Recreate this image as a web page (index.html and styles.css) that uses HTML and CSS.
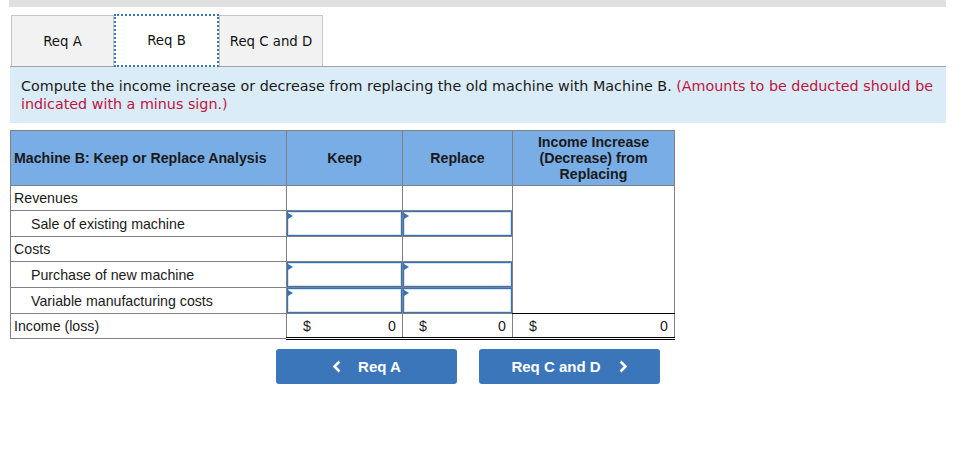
FILE: index.html
```html
<!DOCTYPE html>
<html>
<head>
<meta charset="utf-8">
<link rel="stylesheet" href="styles.css">
</head>
<body>
<div class="topbar"></div>
<div class="tabs">
  <div class="tab">Req A</div>
  <div class="tab active">Req B</div>
  <div class="tab">Req C and D</div>
</div>
<div class="panel">
  Compute the income increase or decrease from replacing the old machine with Machine B. <span class="note">(Amounts to be deducted should be indicated with a minus sign.)</span>
</div>
<table class="grid">
  <colgroup>
    <col class="c1"><col class="c2"><col class="c3"><col class="c4">
  </colgroup>
  <thead>
    <tr class="head">
      <th class="lbl">Machine B: Keep or Replace Analysis</th>
      <th>Keep</th>
      <th>Replace</th>
      <th>Income Increase<br>(Decrease) from<br>Replacing</th>
    </tr>
  </thead>
  <tbody>
    <tr class="r25">
      <td>Revenues</td>
      <td></td>
      <td></td>
      <td class="merged" rowspan="5"></td>
    </tr>
    <tr class="r26">
      <td class="ind">Sale of existing machine</td>
      <td class="inp"><div class="box"><span class="tri"></span></div></td>
      <td class="inp"><div class="box"><span class="tri"></span></div></td>
    </tr>
    <tr class="r25">
      <td>Costs</td>
      <td></td>
      <td></td>
    </tr>
    <tr class="r25">
      <td class="ind">Purchase of new machine</td>
      <td class="inp"><div class="box"><span class="tri"></span></div></td>
      <td class="inp"><div class="box"><span class="tri"></span></div></td>
    </tr>
    <tr class="r26">
      <td class="ind">Variable manufacturing costs</td>
      <td class="inp"><div class="box"><span class="tri"></span></div></td>
      <td class="inp"><div class="box"><span class="tri"></span></div></td>
    </tr>
    <tr class="r25 total">
      <td>Income (loss)</td>
      <td class="num"><div class="val"><span>$</span><span>0</span></div></td>
      <td class="num"><div class="val"><span>$</span><span>0</span></div></td>
      <td class="num"><div class="val"><span>$</span><span>0</span></div></td>
    </tr>
  </tbody>
</table>
<div class="nav">
  <div class="btn"><svg class="chev" width="10" height="13" viewBox="0 0 10 13"><polyline points="7.5,1.5 2.5,6.5 7.5,11.5" fill="none" stroke="#fff" stroke-width="2.6"/></svg>Req A</div>
  <div class="btn">Req C and D<svg class="chev r" width="10" height="13" viewBox="0 0 10 13"><polyline points="2.5,1.5 7.5,6.5 2.5,11.5" fill="none" stroke="#fff" stroke-width="2.6"/></svg></div>
</div>
</body>
</html>
```
FILE: styles.css
```css
body {
  margin: 0;
  background: #fff;
  font-family: "DejaVu Sans", Verdana, sans-serif;
  color: #111;
}
.topbar {
  margin-left: 9px;
  width: 937px;
  height: 7px;
  background: #e0e0e0;
}
.tabs {
  display: flex;
  margin-top: 8px;
  padding-left: 11px;
  height: 51px;
}
.tab {
  box-sizing: border-box;
  width: 103px;
  height: 51px;
  background: #f2f2f2;
  border: 1px solid #c6c6c6;
  border-bottom: none;
  display: flex;
  align-items: center;
  justify-content: center;
  font-size: 13.3px;
  color: #111;
}
.tab.active {
  width: 105px;
  background: #fff;
  border: 2px dotted #3b73b5;
  height: 53px;
  margin-top: -1px;
  position: relative;
  z-index: 1;
}
.tab:last-child {
  width: 104px;
}
.panel {
  margin-left: 10px;
  width: 936px;
  box-sizing: border-box;
  height: 57px;
  border-top: 1px solid #a3a3a3;
  background: #dbecf9;
  padding: 10px 0 0 11px;
  font-size: 14.3px;
  line-height: 18px;
  color: #1a1a1a;
}
.note {
  color: #c0143c;
}
.grid {
  margin: 7px 0 0 10px;
  border-collapse: collapse;
  table-layout: fixed;
  width: 664px;
  font-family: "Liberation Sans", Arial, sans-serif;
  font-size: 14.2px;
}
.c1 { width: 276px; }
.c2 { width: 116px; }
.c3 { width: 110px; }
.c4 { width: 162px; }
.grid th, .grid td {
  border: 1px solid #808080;
  padding: 0;
}
.head {
  height: 55px;
  background: #79ade5;
}
.head th {
  font-weight: bold;
  font-size: 14.2px;
  line-height: 16px;
  color: #1a1a1a;
  text-align: center;
}
.head th.lbl {
  text-align: left;
  padding-left: 3px;
}
.r25 { height: 25px; }
.r26 { height: 26px; }
.grid td {
  padding-left: 3px;
  color: #1a1a1a;
}
.grid td.ind {
  padding-left: 20px;
}
.grid td.merged {
  border-bottom-color: #000;
}
.grid td.inp {
  padding: 0;
  position: relative;
}
.box {
  box-sizing: border-box;
  height: 25px;
  border: 1px solid #3a72b6;
  box-shadow: inset 0 0 0 1px #d4e4f4;
  background: #fff;
  position: relative;
}
.tri {
  position: absolute;
  left: 0;
  top: 1px;
  width: 0;
  height: 0;
  border-top: 3px solid transparent;
  border-bottom: 3px solid transparent;
  border-left: 5px solid #3a72b6;
}
.total td.num {
  border-top: 1px solid #000;
  border-bottom: 3px double #000;
  padding: 0 6px 0 16px;
}
.val {
  display: flex;
  justify-content: space-between;
}
.nav {
  display: flex;
  gap: 22px;
  margin: 9px 0 0 276px;
}
.btn {
  width: 181px;
  height: 35px;
  background: #3b76ba;
  border-radius: 3px;
  color: #fff;
  font-family: "Liberation Sans", Arial, sans-serif;
  font-weight: bold;
  font-size: 15px;
  display: flex;
  align-items: center;
  justify-content: center;
}
.chev {
  margin-right: 16px;
}
.chev.r {
  margin-right: 0;
  margin-left: 17px;
}
```
